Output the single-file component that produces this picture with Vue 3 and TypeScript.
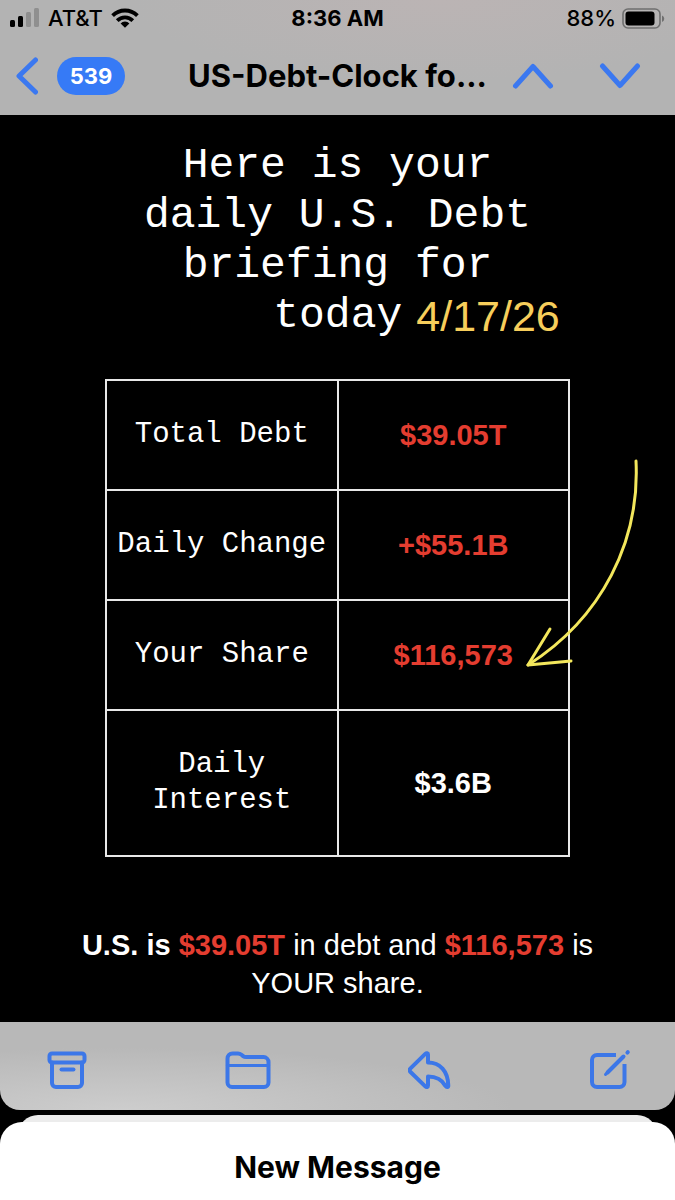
<script setup lang="ts">
interface Row {
  label: string
  value: string
  alert: boolean
}

const unread = 539
const rows: Row[] = [
  { label: 'Total Debt', value: '$39.05T', alert: true },
  { label: 'Daily Change', value: '+$55.1B', alert: true },
  { label: 'Your Share', value: '$116,573', alert: true },
  { label: 'Daily Interest', value: '$3.6B', alert: false },
]
</script>

<template>
  <div class="screen">
    <header class="top">
      <div class="status">
        <div class="carrier">
          <svg width="30" height="20" viewBox="0 0 30 20" aria-hidden="true">
            <rect x="0" y="12" width="5" height="7" rx="1.5" />
            <rect x="8" y="8" width="5" height="11" rx="1.5" />
            <rect x="16" y="4" width="5" height="15" rx="1.5" fill="#8f8f8f" />
            <rect x="24" y="0" width="5" height="19" rx="1.5" fill="#8f8f8f" />
          </svg>
          <span>AT&amp;T</span>
          <svg width="28" height="20" viewBox="0 0 28 20" aria-hidden="true">
            <g fill="none" stroke="#000" stroke-width="3.8">
              <path d="M1.6 7.6A17.6 17.6 0 0 1 26.4 7.6" />
              <path d="M6.2 12.6A11 11 0 0 1 21.8 12.6" />
            </g>
            <path d="M9.6 15.4A6 6 0 0 1 18.4 15.4L14 19.8Z" />
          </svg>
        </div>
        <span class="time">8:36 AM</span>
        <div class="battery">
          <span>88%</span>
          <svg width="43" height="21" viewBox="0 0 43 21" aria-hidden="true">
            <rect x="1" y="1" width="37" height="19" rx="5" fill="none" stroke="#6f6f6f" stroke-width="1.6" />
            <rect x="3.5" y="3.5" width="29" height="14" rx="3" />
            <path d="M40 7.5a3.4 3.4 0 0 1 0 6.4z" fill="#6f6f6f" />
          </svg>
        </div>
      </div>
      <nav class="bar">
        <button class="back" type="button" aria-label="Back to inbox">
          <svg width="22" height="38" viewBox="0 0 22 38" aria-hidden="true">
            <path class="chevron" d="M19.5 3L3 19L19.5 35" />
          </svg>
          <span class="pill">{{ unread }}</span>
        </button>
        <h1 class="title">US-Debt-Clock fo...</h1>
        <div class="steps">
          <button type="button" aria-label="Previous message">
            <svg width="42" height="26" viewBox="0 0 42 26" aria-hidden="true">
              <path class="chevron" d="M3.5 23L21 3.5L38.5 23" />
            </svg>
          </button>
          <button type="button" aria-label="Next message">
            <svg width="42" height="26" viewBox="0 0 42 26" aria-hidden="true">
              <path class="chevron" d="M3.5 3L21 22.5L38.5 3" />
            </svg>
          </button>
        </div>
      </nav>
    </header>

    <main class="mail">
      <h2 class="headline">
        <span>Here is your</span>
        <span>daily U.S. Debt</span>
        <span>briefing for</span>
        <span class="day">today <time class="date" datetime="2026-04-17">4/17/26</time></span>
      </h2>

      <div class="figures">
        <table>
          <tbody>
            <tr v-for="row in rows" :key="row.label">
              <th scope="row">{{ row.label }}</th>
              <td :class="{ red: row.alert }">{{ row.value }}</td>
            </tr>
          </tbody>
        </table>
        <svg class="arrow" width="120" height="216" viewBox="0 0 120 216" aria-hidden="true">
          <path d="M112 4C116 84 78 161 4 208" />
          <path d="M26 172L4 208L47 204" />
        </svg>
      </div>

      <p class="summary">
        <b>U.S. is</b> <b class="red">$39.05T</b> <span>in debt and</span> <b class="red">$116,573</b> <span>is</span> <span>YOUR share.</span>
      </p>
    </main>

    <footer class="tools">
      <button type="button" aria-label="Archive">
        <svg width="42" height="42" viewBox="0 0 42 42" aria-hidden="true">
          <rect x="3.5" y="4.5" width="35" height="9" rx="2.5" />
          <path d="M6 13.5V34a4 4 0 0 0 4 4H32a4 4 0 0 0 4-4V13.5" />
          <path d="M15.5 20.5H27.5" />
        </svg>
      </button>
      <button type="button" aria-label="Move to folder">
        <svg width="46" height="42" viewBox="0 0 46 42" aria-hidden="true">
          <path d="M2.5 33.5V9.5a5 5 0 0 1 5-5h5.5c1.5 0 2.5.5 3.5 1.3l1.6 1.3c.9.7 1.8 1 3 1H38.5a5 5 0 0 1 5 5V33.5a4.5 4.5 0 0 1-4.5 4.5H7A4.5 4.5 0 0 1 2.5 33.5Z" />
          <path d="M2.5 16.5H43.5" stroke-width="3" />
        </svg>
      </button>
      <button type="button" aria-label="Reply">
        <svg width="44" height="42" viewBox="0 0 44 42" aria-hidden="true">
          <path d="M20 5.5V13.5C32 13.5 40 22 40.3 36.5C40.3 38.5 38.5 38.5 37.5 37C34 30.5 29 27.5 20 27.5V36.5C20 38.2 18.5 38.5 17.3 37.3L2.5 23C1.2 21.7 1.2 20.7 2.5 19.4L17.3 4.9C18.5 3.7 20 4 20 5.5Z" />
        </svg>
      </button>
      <button type="button" aria-label="Compose">
        <svg width="42" height="42" viewBox="0 0 42 42" aria-hidden="true">
          <path d="M27 6H8a5 5 0 0 0-5 5V33a5 5 0 0 0 5 5H30.5a5 5 0 0 0 5-5V15" stroke-linecap="butt" />
          <path d="M18.5 23.5L34.5 7.5" stroke-width="4" />
          <path d="M16.5 25.5L19 23" stroke-width="3" />
          <path d="M38.4 3.6L38.8 3.2" stroke-width="4" />
        </svg>
      </button>
    </footer>

    <div class="sheet-back"></div>
    <section class="sheet">
      <h2>New Message</h2>
    </section>
  </div>
</template>

<style>
body {
  margin: 0;
  background: #000;
}
</style>

<style scoped>
.screen {
  display: flex;
  flex-direction: column;
  min-height: 100vh;
  background: #000;
  font-family: Inter, 'Liberation Sans', sans-serif;
}

button {
  display: flex;
  align-items: center;
  margin: 0;
  padding: 0;
  border: 0;
  background: none;
  font: inherit;
  cursor: pointer;
}

svg {
  display: block;
}

h1,
h2,
p {
  margin: 0;
}

.top {
  height: 115px;
  background: radial-gradient(ellipse at 65% 0, #bbb4b4, #b3b3b3 50%);
  color: #000;
}

.status {
  display: grid;
  grid-template-columns: 1fr auto 1fr;
  align-items: center;
  height: 36px;
  padding: 0 10px;
  font-size: 22px;
  font-weight: 500;
}

.carrier,
.battery {
  display: flex;
  align-items: center;
  gap: 8px;
}

.battery {
  justify-content: flex-end;
  gap: 6px;
}

.time {
  font-weight: 700;
}

.bar {
  display: grid;
  grid-template-columns: 1fr auto 1fr;
  align-items: center;
  height: 79px;
  padding: 0 16px;
}

.chevron {
  fill: none;
  stroke: #3b78f0;
  stroke-width: 5;
  stroke-linecap: round;
  stroke-linejoin: round;
}

.back {
  gap: 19px;
}

.pill {
  width: 68px;
  border-radius: 19px;
  background: #367af6;
  color: #fff;
  font-size: 22px;
  font-weight: 700;
  line-height: 38px;
  text-align: center;
}

.title {
  font-size: 31px;
  font-weight: 700;
  line-height: 40px;
  white-space: nowrap;
}

.steps {
  display: flex;
  justify-content: flex-end;
  gap: 45px;
  padding-right: 18px;
}

.mail {
  flex: 1;
  display: flex;
  flex-direction: column;
  align-items: center;
  padding: 26px 64px 0;
  color: #fff;
}

.headline {
  font-family: 'Liberation Mono', monospace;
  font-size: 43px;
  font-weight: 400;
  line-height: 50px;
  text-align: center;
}

.headline > span {
  display: block;
}

.headline > .day {
  display: flex;
  justify-content: center;
  gap: 14px;
  padding-left: 158px;
}

.date {
  color: #f7ce5b;
  font-family: 'Liberation Sans', sans-serif;
}

.figures {
  position: relative;
  width: 85%;
  margin-top: 38px;
}

table {
  width: 100%;
  border-collapse: collapse;
  table-layout: fixed;
}

th,
td {
  padding: 36px 8px;
  border: 2px solid #e8e8e8;
  font-size: 29px;
  line-height: 36px;
  text-align: center;
}

th {
  font-family: 'Liberation Mono', monospace;
  font-weight: 400;
}

td {
  font-family: 'Liberation Sans', sans-serif;
  font-weight: 700;
}

.red {
  color: #e43d30;
}

.arrow {
  position: absolute;
  top: 78px;
  right: -74px;
  fill: none;
  stroke: #f3e75c;
  stroke-width: 3;
  stroke-linecap: round;
  stroke-linejoin: round;
}

.summary {
  margin-top: 69px;
  font-family: 'Liberation Sans', sans-serif;
  font-size: 29px;
  line-height: 38px;
  text-align: center;
}

.tools {
  display: flex;
  align-items: center;
  justify-content: space-between;
  height: 88px;
  padding: 0 44px 0 46px;
  box-sizing: border-box;
  border-radius: 0 0 20px 20px;
  background: radial-gradient(ellipse at 18% 100%, #cdcdcd, #b8b8b8 50%);
}

.tools svg {
  margin-top: 8px;
  fill: none;
  stroke: #3c77e8;
  stroke-width: 4;
  stroke-linecap: round;
  stroke-linejoin: round;
}

.sheet-back {
  height: 24px;
  margin: 5px 18px -17px;
  border-radius: 20px 20px 0 0;
  background: #ececec;
}

.sheet {
  position: relative;
  padding: 25px 0 13px;
  border-radius: 22px 22px 0 0;
  background: #fff;
  color: #000;
  text-align: center;
}

.sheet h2 {
  font-size: 30px;
  font-weight: 700;
  line-height: 40px;
}
</style>
